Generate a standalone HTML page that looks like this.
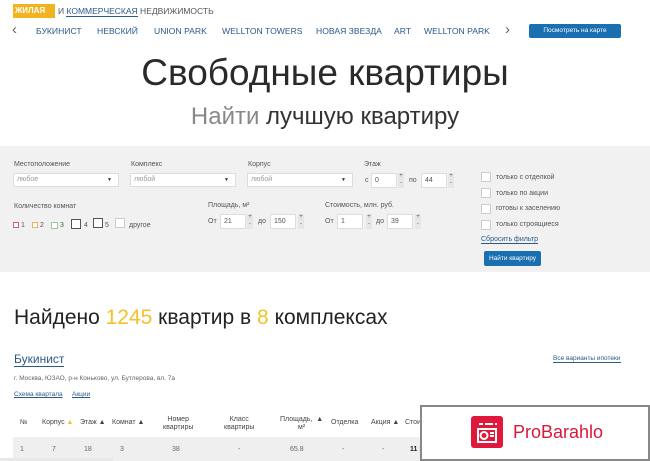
<!DOCTYPE html>
<html><head><meta charset="utf-8"><style>
*{margin:0;padding:0;box-sizing:border-box}
body{width:650px;height:461px;overflow:hidden;background:#fff;font-family:"Liberation Sans","DejaVu Sans",sans-serif;color:#333;position:relative}
.a{position:absolute;white-space:nowrap}
.nav{font-size:8.6px;color:#2a5a8a;top:26px}
.lbl{font-size:7px;color:#555}
.sel{position:absolute;height:14px;background:#fff;border:1px solid #ddd;font-size:7px;color:#999;padding:2px 3px}
.sel:after{content:"▼";position:absolute;right:6px;top:3px;font-size:5px;color:#333}
.inp{position:absolute;height:15px;width:26px;background:#fff;border:1px solid #ddd;font-size:7px;color:#555;padding:3px 3px}
.sp{position:absolute;width:6px;height:15px;background:#e6e6e6;font-size:6px;line-height:7px;text-align:center;color:#555}
.cb{position:absolute;width:10px;height:10px;background:#fff;border:1px solid #ccc}
.th{font-size:7px;color:#444;text-align:center;line-height:8px}
.td{font-size:7px;color:#666}
</style></head><body>
<div class="a" style="left:13px;top:4px;width:42px;height:14px;background:#f2b320"></div>
<div class="a" style="left:15px;top:6px;font-size:8px;color:#fff;font-weight:bold">ЖИЛАЯ</div>
<div class="a" style="left:58px;top:6px;font-size:8.5px;color:#555">И <span style="color:#2a5a8a;border-bottom:1px solid #2a5a8a">КОММЕРЧЕСКАЯ</span> НЕДВИЖИМОСТЬ</div>
<div class="a" style="left:12px;top:21px;font-size:15px;color:#666">&lsaquo;</div>
<div class="a nav" style="left:36px">БУКИНИСТ</div>
<div class="a nav" style="left:97px">НЕВСКИЙ</div>
<div class="a nav" style="left:154px">UNION PARK</div>
<div class="a nav" style="left:222px">WELLTON TOWERS</div>
<div class="a nav" style="left:316px">НОВАЯ ЗВЕЗДА</div>
<div class="a nav" style="left:394px">ART</div>
<div class="a nav" style="left:424px">WELLTON PARK</div>
<div class="a" style="left:505px;top:21px;font-size:15px;color:#666">&rsaquo;</div>
<div class="a" style="left:529px;top:24px;width:92px;height:14px;background:#1a6fb0;border-radius:2px;color:#fff;font-size:6.5px;text-align:center;line-height:14px">Посмотреть на карте</div>
<div class="a" style="left:0;width:650px;text-align:center;top:52px;font-size:37px;color:#2a2a2a">Свободные квартиры</div>
<div class="a" style="left:0;width:650px;text-align:center;top:103px;font-size:24px;color:#333"><span style="color:#888">Найти</span> лучшую квартиру</div>
<div class="a" style="left:0;top:146px;width:650px;height:126px;background:#f1f1f1"></div>
<div class="a lbl" style="left:14px;top:161px">Местоположение</div>
<div class="sel" style="left:13px;top:173px;width:106px">любое</div>
<div class="a lbl" style="left:131px;top:161px">Комплекс</div>
<div class="sel" style="left:130px;top:173px;width:106px">любой</div>
<div class="a lbl" style="left:248px;top:161px">Корпус</div>
<div class="sel" style="left:247px;top:173px;width:106px">любой</div>
<div class="a lbl" style="left:364px;top:161px">Этаж</div>
<div class="a lbl" style="left:365px;top:177px">с</div>
<div class="inp" style="left:371px;top:173px">0</div><div class="sp" style="left:398px;top:173px">+<br>-</div>
<div class="a lbl" style="left:409px;top:177px">по</div>
<div class="inp" style="left:421px;top:173px">44</div><div class="sp" style="left:448px;top:173px">+<br>-</div>
<div class="a lbl" style="left:14px;top:203px">Количество комнат</div>
<div class="cb" style="left:13px;top:222px;width:6px;height:6px;border-color:#c66"></div><div class="a lbl" style="left:21px;top:222px">1</div>
<div class="cb" style="left:32px;top:222px;width:6px;height:6px;border-color:#e9b060"></div><div class="a lbl" style="left:40px;top:222px">2</div>
<div class="cb" style="left:51px;top:222px;width:7px;height:7px;border-color:#9c9"></div><div class="a lbl" style="left:60px;top:222px">3</div>
<div class="cb" style="left:71px;top:219px;border-color:#555"></div><div class="a lbl" style="left:84px;top:222px">4</div>
<div class="cb" style="left:93px;top:218px;border-color:#555"></div><div class="a lbl" style="left:105px;top:222px">5</div>
<div class="cb" style="left:115px;top:218px"></div><div class="a lbl" style="left:129px;top:222px">другое</div>
<div class="a lbl" style="left:208px;top:202px">Площадь, м²</div>
<div class="a lbl" style="left:208px;top:218px">От</div>
<div class="inp" style="left:220px;top:214px">21</div><div class="sp" style="left:247px;top:214px">+<br>-</div>
<div class="a lbl" style="left:258px;top:218px">до</div>
<div class="inp" style="left:270px;top:214px">150</div><div class="sp" style="left:298px;top:214px">+<br>-</div>
<div class="a lbl" style="left:325px;top:202px">Стоимость, млн. руб.</div>
<div class="a lbl" style="left:325px;top:218px">От</div>
<div class="inp" style="left:337px;top:214px">1</div><div class="sp" style="left:366px;top:214px">+<br>-</div>
<div class="a lbl" style="left:376px;top:218px">до</div>
<div class="inp" style="left:387px;top:214px">39</div><div class="sp" style="left:415px;top:214px">+<br>-</div>
<div class="cb" style="left:481px;top:172px"></div><div class="a lbl" style="left:496px;top:174px">только с отделкой</div>
<div class="cb" style="left:481px;top:188px"></div><div class="a lbl" style="left:496px;top:190px">только по акции</div>
<div class="cb" style="left:481px;top:204px"></div><div class="a lbl" style="left:496px;top:205px">готовы к заселению</div>
<div class="cb" style="left:481px;top:220px"></div><div class="a lbl" style="left:496px;top:221px">только строящиеся</div>
<div class="a lbl" style="left:481px;top:236px;color:#2a5a8a;border-bottom:1px solid #2a5a8a">Сбросить фильтр</div>
<div class="a" style="left:484px;top:251px;width:57px;height:15px;background:#1a6fb0;border-radius:2px;color:#fff;font-size:6.5px;text-align:center;line-height:15px">Найти квартиру</div>
<div class="a" style="left:14px;top:306px;font-size:21px;color:#222">Найдено <span style="color:#f2c228">1245</span> квартир в <span style="color:#f2c228">8</span> комплексах</div>
<div class="a" style="left:14px;top:353px;font-size:12px;color:#2a5a8a;border-bottom:1px solid #2a5a8a;line-height:13px">Букинист</div>
<div class="a" style="left:553px;top:355px;font-size:6.5px;color:#2a5a8a;border-bottom:1px solid #2a5a8a">Все варианты ипотеки</div>
<div class="a td" style="left:14px;top:375px;font-size:6.5px">г. Москва, ЮЗАО, р-н Коньково, ул. Бутлерова, вл. 7а</div>
<div class="a td" style="left:14px;top:391px;font-size:6.5px;color:#2a5a8a;text-decoration:underline">Схема квартала</div>
<div class="a td" style="left:72px;top:391px;font-size:6.5px;color:#2a5a8a;text-decoration:underline">Акции</div>
<div class="a th" style="left:20px;top:419px">№</div>
<div class="a th" style="left:42px;top:419px">Корпус <span style="color:#f2c228">▲</span></div>
<div class="a th" style="left:80px;top:419px">Этаж ▲</div>
<div class="a th" style="left:112px;top:419px">Комнат ▲</div>
<div class="a th" style="left:163px;top:416px">Номер<br>квартиры</div>
<div class="a th" style="left:224px;top:416px">Класс<br>квартиры</div>
<div class="a th" style="left:280px;top:416px">Площадь, &nbsp;▲<br>м²</div>
<div class="a th" style="left:331px;top:419px">Отделка</div>
<div class="a th" style="left:371px;top:419px">Акция ▲</div>
<div class="a th" style="left:405px;top:419px">Стои</div>
<div class="a" style="left:13px;top:437px;width:420px;height:24px;background:#efefef"></div>
<div class="a td" style="left:20px;top:446px">1</div>
<div class="a td" style="left:52px;top:446px">7</div>
<div class="a td" style="left:84px;top:446px">18</div>
<div class="a td" style="left:120px;top:446px">3</div>
<div class="a td" style="left:172px;top:446px">38</div>
<div class="a td" style="left:238px;top:446px">-</div>
<div class="a td" style="left:290px;top:446px">65.8</div>
<div class="a td" style="left:342px;top:446px">-</div>
<div class="a td" style="left:382px;top:446px">-</div>
<div class="a td" style="left:410px;top:446px;font-weight:bold;color:#222">11 1</div>
<div class="a" style="left:0;top:458px;width:113px;height:3px;background:#e8e8e8"></div>
<div class="a" style="left:420px;top:405px;width:230px;height:56px;background:#fff;border:2px solid #888"></div>
<div class="a" style="left:471px;top:416px;width:32px;height:32px;background:#e0183c;border-radius:3px"></div>
<svg class="a" style="left:471px;top:416px" width="32" height="32" viewBox="0 0 32 32"><g fill="none" stroke="#fff" stroke-width="2"><line x1="8" y1="8" x2="12" y2="8"/><line x1="14" y1="8" x2="22" y2="8"/><line x1="24" y1="8" x2="26" y2="8"/><rect x="7" y="13" width="18" height="13"/><circle cx="13" cy="19.5" r="3.5"/><line x1="19" y1="17" x2="23" y2="17"/><line x1="19" y1="20" x2="23" y2="20"/></g></svg>
<div class="a" style="left:513px;top:422px;font-size:18px;color:#d9173a">ProBarahlo</div>
</body></html>
